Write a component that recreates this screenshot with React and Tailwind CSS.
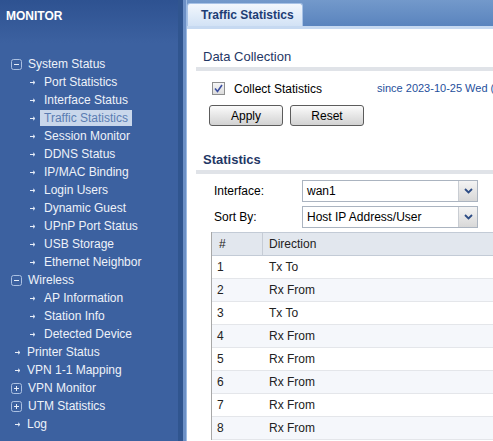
import React from "react";

const Arrow = () => (
  <svg width="6" height="5" viewBox="0 0 6 5" className="shrink-0">
    <path d="M0 2.5H4.5" stroke="#e8eef8" strokeWidth="1" />
    <path d="M3 0.8L5 2.5L3 4.2" stroke="#e8eef8" strokeWidth="1" fill="none" />
  </svg>
);

const BoxIcon = ({ plus }) => (
  <svg width="11" height="11" viewBox="0 0 11 11" className="shrink-0">
    <rect x="0.5" y="0.5" width="10" height="10" rx="2" fill="none" stroke="#aac0e2" />
    <path d="M3 5.5H8" stroke="#e8eef8" />
    {plus && <path d="M5.5 3V8" stroke="#e8eef8" />}
  </svg>
);

const Top = ({ label, icon }) => (
  <div className="h-[18px] flex items-center">
    {icon === "minus" || icon === "plus" ? (
      <div className="w-[28px] pl-[11px] flex items-center">
        <BoxIcon plus={icon === "plus"} />
      </div>
    ) : (
      <div className="w-[27px] pl-[15px] flex items-center">
        <Arrow />
      </div>
    )}
    <span>{label}</span>
  </div>
);

const Sub = ({ label, active }) => (
  <div className="h-[18px] flex items-center">
    <div className="w-[40px] pl-[30px] flex items-center">
      <Arrow />
    </div>
    <span
      className={
        active
          ? "bg-[#c9d7eb] text-[#5b7db2] px-[4px] h-[16px] leading-[16px]"
          : "px-[4px]"
      }
    >
      {label}
    </span>
  </div>
);

const Select = ({ value }) => (
  <div className="w-[176px] shrink-0 h-[22px] border border-[#abb4c0] bg-white flex items-stretch">
    <div className="flex-1 flex items-center pl-[4px] text-[12px] text-black whitespace-nowrap">{value}</div>
    <div className="w-[19px] border-l border-[#c9cdd3] bg-gradient-to-b from-[#f4f4f4] to-[#d8d8d8] flex items-center justify-center">
      <svg width="9" height="6" viewBox="0 0 9 6">
        <path d="M1 1L4.5 4.5L8 1" stroke="#2d4c85" strokeWidth="1.8" fill="none" />
      </svg>
    </div>
  </div>
);

const rows = [
  ["1", "Tx To"],
  ["2", "Rx From"],
  ["3", "Tx To"],
  ["4", "Rx From"],
  ["5", "Rx From"],
  ["6", "Rx From"],
  ["7", "Rx From"],
  ["8", "Rx From"],
];

export default function App() {
  return (
    <div
      className="w-[493px] h-[441px] overflow-hidden flex bg-white"
      style={{ fontFamily: '"Liberation Sans", Arial, sans-serif' }}
    >
      {/* Sidebar */}
      <div className="w-[178px] shrink-0 bg-[#3c61a0] text-[12px] text-[#eef2f9]">
        <div className="h-[43px] bg-gradient-to-b from-[#2e5291] to-[#3c61a0] pt-[8px] pl-[6px]">
          <div className="font-bold text-white leading-[16px]">MONITOR</div>
        </div>
        <div className="pt-[12px]">
          <Top label="System Status" icon="minus" />
          <Sub label="Port Statistics" />
          <Sub label="Interface Status" />
          <Sub label="Traffic Statistics" active />
          <Sub label="Session Monitor" />
          <Sub label="DDNS Status" />
          <Sub label="IP/MAC Binding" />
          <Sub label="Login Users" />
          <Sub label="Dynamic Guest" />
          <Sub label="UPnP Port Status" />
          <Sub label="USB Storage" />
          <Sub label="Ethernet Neighbor" />
          <Top label="Wireless" icon="minus" />
          <Sub label="AP Information" />
          <Sub label="Station Info" />
          <Sub label="Detected Device" />
          <Top label="Printer Status" />
          <Top label="VPN 1-1 Mapping" />
          <Top label="VPN Monitor" icon="plus" />
          <Top label="UTM Statistics" icon="plus" />
          <Top label="Log" />
        </div>
      </div>
      <div className="w-[5px] shrink-0 bg-[#30558f]" />
      <div className="w-[3px] shrink-0 bg-[#6c90c6]" />

      {/* Content */}
      <div className="flex-1 min-w-0 border-l border-[#9dbbe3] flex flex-col">
        <div className="h-[26px] shrink-0 bg-gradient-to-b from-[#7399cb] to-[#5a84be] flex items-end">
          <div className="w-[116px] h-[23px] rounded-t-[3px] border border-b-0 border-[#a7c2e6] bg-gradient-to-b from-[#f2f7fd] to-[#d2e2f5] pl-[13px] flex items-center text-[12px] font-bold text-[#1d3d75] whitespace-nowrap">
            Traffic Statistics
          </div>
        </div>
        <div className="h-[3px] shrink-0 bg-[#c6d9f1]" />

        <div className="pl-[9px] pt-[20px] whitespace-nowrap">
          <div className="pl-[7px] text-[13px] leading-[16px] text-[#1f3765]">Data Collection</div>
          <div className="mt-[2px] h-[4px] bg-[#e0e3e8] w-[400px]" />

          <div className="mt-[9px] h-[17px] flex items-center pl-[16px] text-[12px] text-black">
            <div className="w-[13px] h-[13px] shrink-0 border border-[#8e8f8f] bg-gradient-to-b from-[#f6f6f6] to-[#dcdcdc] flex items-center justify-center">
              <svg width="9" height="9" viewBox="0 0 9 9">
                <path d="M1 4.5L3.5 7.5L8 1" stroke="#3b4fa0" strokeWidth="1.6" fill="none" />
              </svg>
            </div>
            <span className="ml-[9px] shrink-0">Collect Statistics</span>
            <span className="ml-[55px] shrink-0 text-[11px] text-[#1f4f9c]">since 2023-10-25 Wed (</span>
          </div>

          <div className="mt-[8px] flex gap-[7px] pl-[13px]">
            <button className="w-[74px] h-[21px] border border-[#5c5c5c] rounded-[3px] bg-gradient-to-b from-[#fbfbfb] to-[#d2d2d2] text-[12px] text-black">
              Apply
            </button>
            <button className="w-[74px] h-[21px] border border-[#5c5c5c] rounded-[3px] bg-gradient-to-b from-[#fbfbfb] to-[#d2d2d2] text-[12px] text-black">
              Reset
            </button>
          </div>

          <div className="mt-[26px] pl-[7px] text-[13px] leading-[16px] font-bold text-[#1f3765]">Statistics</div>
          <div className="mt-[2px] h-[4px] bg-[#e0e3e8] w-[400px]" />

          <div className="mt-[6px] pl-[18px] flex flex-col gap-[4px] text-[12px] text-black">
            <div className="flex items-center">
              <div className="w-[88px] shrink-0">Interface:</div>
              <Select value="wan1" />
            </div>
            <div className="flex items-center">
              <div className="w-[88px] shrink-0">Sort By:</div>
              <Select value="Host IP Address/User" />
            </div>
          </div>

          <div className="mt-[4px] ml-[15px] w-[400px] border-l border-[#a8a8a8] text-[12px]">
            <div className="h-[24px] flex bg-[#e2e7ee] border-t border-b border-[#c3cbd6] text-[#222]">
              <div className="w-[51px] pl-[7px] flex items-center border-r border-[#c6ccd5]">#</div>
              <div className="pl-[6px] flex items-center">Direction</div>
            </div>
            {rows.map(([n, d], i) => (
              <div
                key={n}
                className={
                  "h-[23px] flex border-b border-[#e4e6ea] text-[#222] " +
                  (i % 2 === 1 ? "bg-[#f5f7fb]" : "bg-white")
                }
              >
                <div className="w-[52px] pl-[5px] flex items-center">{n}</div>
                <div className="pl-[5px] flex items-center">{d}</div>
              </div>
            ))}
          </div>
        </div>
      </div>
    </div>
  );
}
